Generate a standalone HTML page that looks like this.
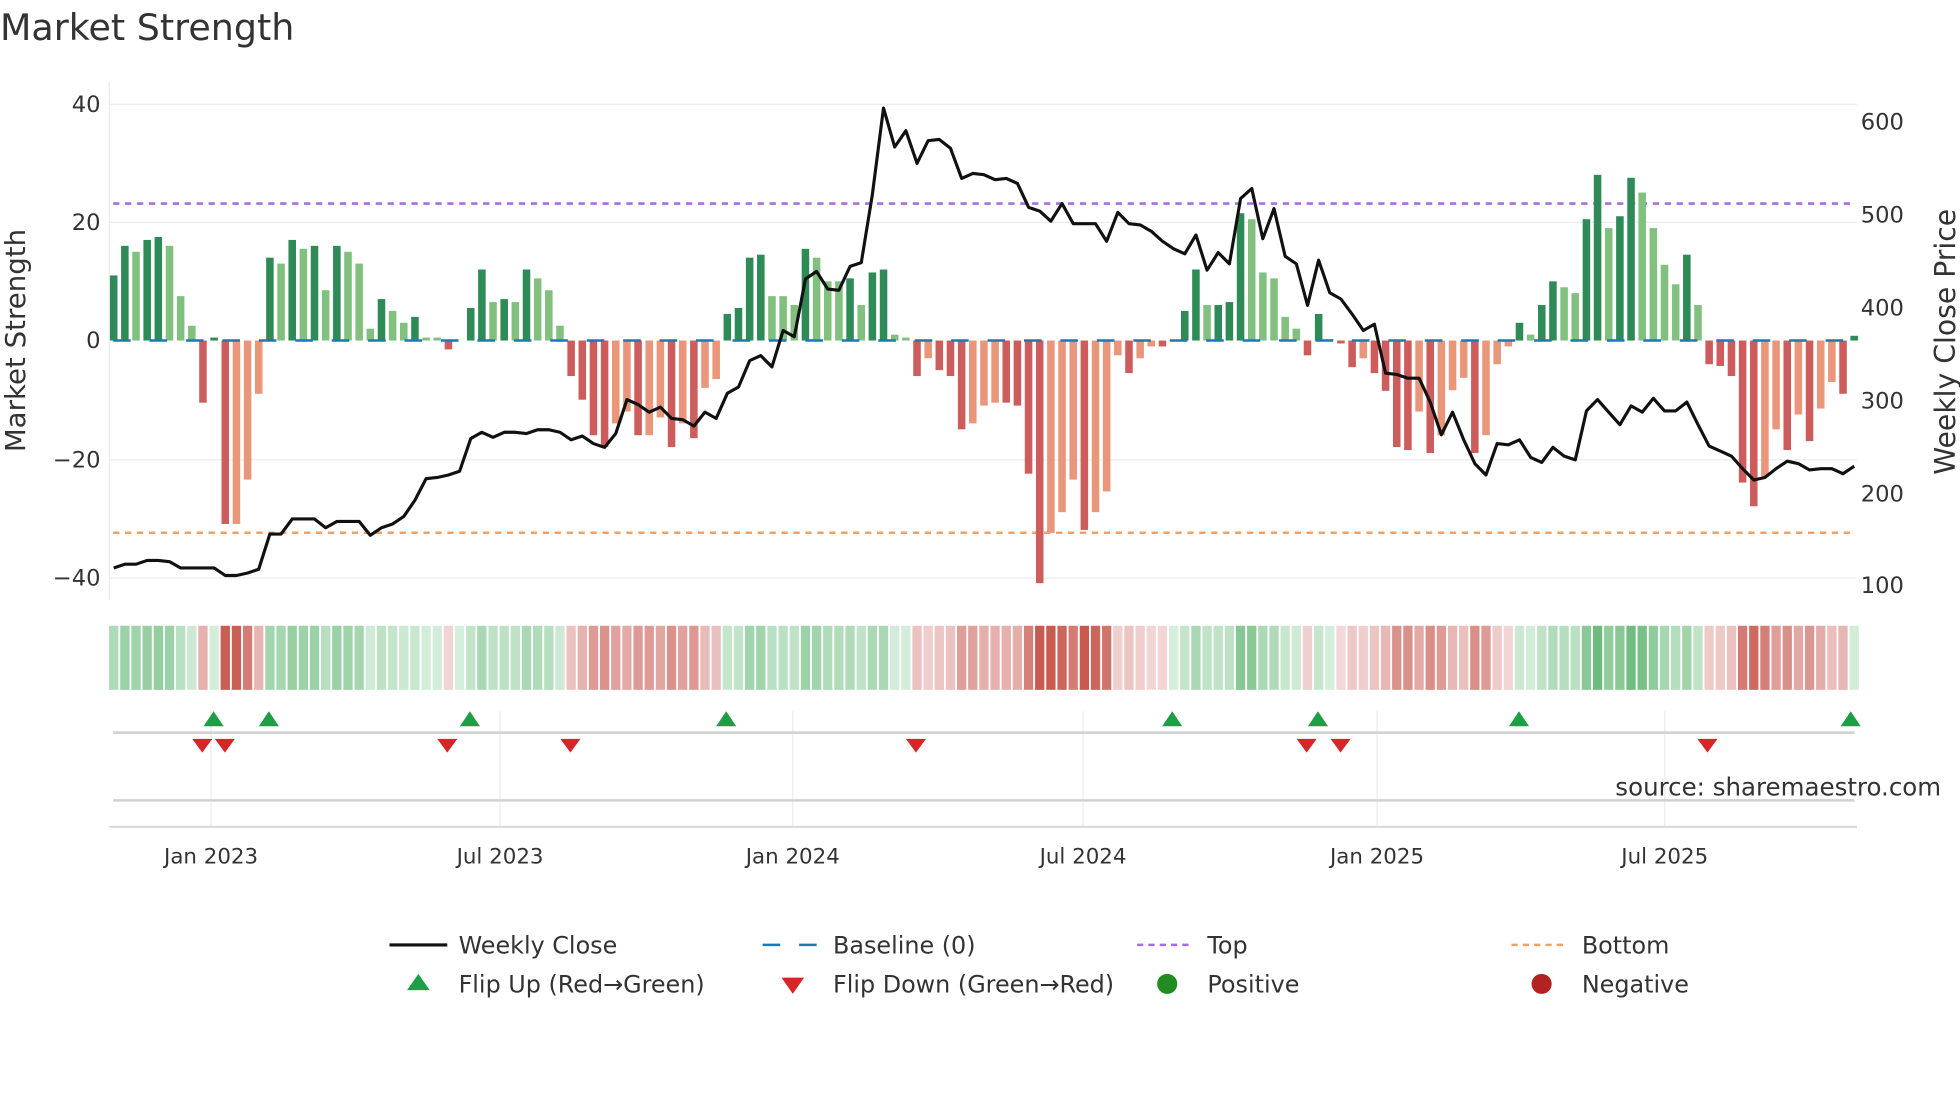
<!DOCTYPE html>
<html><head><meta charset="utf-8"><style>
html,body{margin:0;padding:0;background:#fff;}
svg{display:block;}
text{font-family:"DejaVu Sans","Liberation Sans",sans-serif;fill:#333;}
</style></head><body>
<svg id="s" xmlns="http://www.w3.org/2000/svg" width="1960" height="1102" viewBox="0 0 1560 877" preserveAspectRatio="none">
<rect width="1560" height="877" fill="#fff"/>
<text x="0" y="32" font-size="29" fill="#333">Market Strength</text>
<!-- grid -->
<g stroke="#ececec" stroke-width="1">
<line x1="87" y1="83" x2="1478" y2="83"/><line x1="87" y1="177" x2="1478" y2="177"/>
<line x1="87" y1="366" x2="1478" y2="366"/><line x1="87" y1="460" x2="1478" y2="460"/>
<line x1="87" y1="65" x2="87" y2="478"/>
</g>
<g font-size="18" text-anchor="end">
<text x="80" y="89">40</text><text x="80" y="183">20</text><text x="80" y="277">0</text>
<text x="80" y="372">−20</text><text x="80" y="466">−40</text>
</g>
<g font-size="18">
<text x="1481" y="103">600</text><text x="1481" y="177">500</text><text x="1481" y="251">400</text>
<text x="1481" y="325">300</text><text x="1481" y="399">200</text><text x="1481" y="472">100</text>
</g>
<text transform="translate(20,271) rotate(-90)" font-size="22" text-anchor="middle">Market Strength</text>
<text transform="translate(1556,272) rotate(-90)" font-size="22.5" text-anchor="middle">Weekly Close Price</text>
<line x1="90" y1="162" x2="1476" y2="162" stroke="#a66ee0" stroke-width="2" stroke-dasharray="5,4.5"/>
<line x1="90" y1="424" x2="1476" y2="424" stroke="#f0a266" stroke-width="2" stroke-dasharray="5,4.5"/>
<g id="bars"></g>
<line x1="90" y1="271" x2="1476" y2="271" stroke="#1f77b4" stroke-width="2" stroke-dasharray="14,15"/>
<polyline id="price" fill="none" stroke="#111" stroke-width="2.5" stroke-linejoin="round"/>
<g id="heat"></g>
<!-- marker panel -->
<g stroke="#ececec" stroke-width="1">
<line x1="168" y1="566" x2="168" y2="658"/><line x1="398" y1="566" x2="398" y2="658"/>
<line x1="631" y1="566" x2="631" y2="658"/><line x1="862" y1="566" x2="862" y2="658"/>
<line x1="1096" y1="566" x2="1096" y2="658"/><line x1="1325" y1="566" x2="1325" y2="658"/>
</g>
<line x1="90" y1="583" x2="1476" y2="583" stroke="#d0d0d0" stroke-width="2"/>
<line x1="90" y1="637" x2="1476" y2="637" stroke="#d0d0d0" stroke-width="2"/>
<line x1="87" y1="658" x2="1478" y2="658" stroke="#d6d6d6" stroke-width="1.5"/>
<g id="mk"></g>
<text x="1545" y="633" font-size="19.5" fill="#999" text-anchor="end">source: sharemaestro.com</text>
<g font-size="17" text-anchor="middle">
<text x="168" y="687">Jan 2023</text><text x="398" y="687">Jul 2023</text><text x="631" y="687">Jan 2024</text>
<text x="862" y="687">Jul 2024</text><text x="1096" y="687">Jan 2025</text><text x="1325" y="687">Jul 2025</text>
</g>
<!-- legend -->
<line x1="310" y1="752" x2="356" y2="752" stroke="#111" stroke-width="2.5"/>
<line x1="607" y1="752" x2="652" y2="752" stroke="#1f77b4" stroke-width="2" stroke-dasharray="14,15"/>
<line x1="905" y1="752" x2="949" y2="752" stroke="#a66ee0" stroke-width="2" stroke-dasharray="5,4"/>
<line x1="1203" y1="752" x2="1248" y2="752" stroke="#f0a266" stroke-width="2" stroke-dasharray="5,4"/>
<polygon points="333,775 324,788 342,788" fill="#1f9e45"/>
<polygon points="622,778 640,778 631,791" fill="#d62728"/>
<circle cx="929" cy="783" r="8" fill="#228b22"/>
<circle cx="1227" cy="783" r="8" fill="#b22222"/>
<g font-size="19">
<text x="365" y="759">Weekly Close</text><text x="663" y="759">Baseline (0)</text>
<text x="961" y="759">Top</text><text x="1259" y="759">Bottom</text>
<text x="365" y="790">Flip Up (Red→Green)</text><text x="663" y="790">Flip Down (Green→Red)</text>
<text x="961" y="790">Positive</text><text x="1259" y="790">Negative</text>
</g>
</svg>
<script>
(function(){
var NS="http://www.w3.org/2000/svg";
var raw="11d,16d,15l,17d,17.5d,16l,7.5l,2.5l,-10.5d,0.5d,-31d,-31l,-23.5l,-9l,14d,13l,17d,15.5l,16d,8.5l,16d,15l,13l,2l,7d,5l,3l,4d,0.5l,0.5l,-1.5d,0l,5.5d,12d,6.5l,7d,6.5l,12d,10.5l,8.5l,2.5l,-6d,-10d,-16d,-18d,-14l,-12l,-16d,-16l,-13l,-18d,-14l,-16.5d,-8l,-6.5l,4.5d,5.5d,14d,14.5d,7.5l,7.5l,6l,15.5d,14l,10l,10l,10.5d,6l,11.5d,12d,1l,0.5l,-6d,-3l,-5d,-6d,-15d,-14l,-11l,-10.5l,-10.5d,-11d,-22.5d,-41d,-32.5l,-29l,-23.5l,-32d,-29l,-25.5l,-2.5l,-5.5d,-3l,-1l,-1d,0l,5d,12d,6l,6d,6.5d,21.5d,20.5l,11.5l,10.5l,4l,2l,-2.5d,4.5d,0.2d,-0.5d,-4.5d,-3l,-5.5d,-8.5d,-18d,-18.5d,-12l,-19d,-16l,-8.4l,-6.3l,-19d,-16l,-4l,-1l,3d,1l,6d,10d,9l,8l,20.5d,28d,19l,21d,27.5d,25l,19l,12.8l,9.5l,14.5d,6l,-4d,-4.3d,-6d,-24d,-28d,-23l,-15l,-18.5d,-12.5l,-17d,-11.5l,-7l,-9d,0.8d".split(",");
var P=[452,449,449,446,446,447,452,452,452,452,458,458,456,453,425,425,413,413,413,420,415,415,415,426,420,417,411,398,381,380,378,375,349,344,348,344,344,345,342,342,344,350,347,353,356,345,318,322,328,324,333,334,339,328,333,313,308,287,283,292,263,268,222,216,230,231,212,209,155,86,117,104,130,112,111,118,142,138,139,143,142,146,165,168,176,162,178,178,178,192,169,178,179,184,192,198,202,187,215,201,210,158,150,190,166,204,210,243,207,233,238,250,263,258,297,298,301,301,320,346,328,350,369,378,353,354,350,364,368,356,363,366,327,318,328,338,323,328,317,327,327,320,338,355,359,363,373,382,380,373,367,369,374,373,373,377,371];
var bars=document.getElementById("bars"),heat=document.getElementById("heat");
var st=8.88,x0=90.5,pts=[];
function mix(a,b,t){return "rgb("+[0,1,2].map(function(k){return Math.round(a[k]+(b[k]-a[k])*t)}).join(",")+")";}
for(var i=0;i<raw.length;i++){
 var s=raw[i],dk=s.slice(-1)=="d",v=parseFloat(s);
 var cx=x0+i*st;
 if(Math.abs(v)>0.05){
  var h=Math.abs(v)*4.71,r=document.createElementNS(NS,"rect");
  r.setAttribute("x",(cx-3).toFixed(2));r.setAttribute("width","6");
  r.setAttribute("y",(v>0?271-h:271).toFixed(2));r.setAttribute("height",h.toFixed(2));
  r.setAttribute("fill",v>0?(dk?"#2e8b57":"#81c07f"):(dk?"#cd5c5c":"#e9967a"));
  bars.appendChild(r);
 }
 var t=Math.min(1,Math.abs(v)/32),c;
 if(v>=0)c=mix([214,238,220],[96,180,112],t);else c=mix([243,218,218],[200,90,80],t);
 var hr=document.createElementNS(NS,"rect");
 hr.setAttribute("x",(cx-3.7).toFixed(2));hr.setAttribute("width","7.4");
 hr.setAttribute("y","498");hr.setAttribute("height","51");hr.setAttribute("fill",c);
 heat.appendChild(hr);
 pts.push(cx.toFixed(1)+","+P[i]);
}
document.getElementById("price").setAttribute("points",pts.join(" "));
var mk=document.getElementById("mk");
[170,214,374,578,933,1049,1209,1473].forEach(function(x){
 var p=document.createElementNS(NS,"polygon");
 p.setAttribute("points",x+",566 "+(x-8)+",578 "+(x+8)+",578");p.setAttribute("fill","#1f9e45");mk.appendChild(p);});
[161,179,356,454,729,1040,1067,1359].forEach(function(x){
 var p=document.createElementNS(NS,"polygon");
 p.setAttribute("points",(x-8)+",588 "+(x+8)+",588 "+x+",599");p.setAttribute("fill","#d62728");mk.appendChild(p);});
})();
</script>
</body></html>
